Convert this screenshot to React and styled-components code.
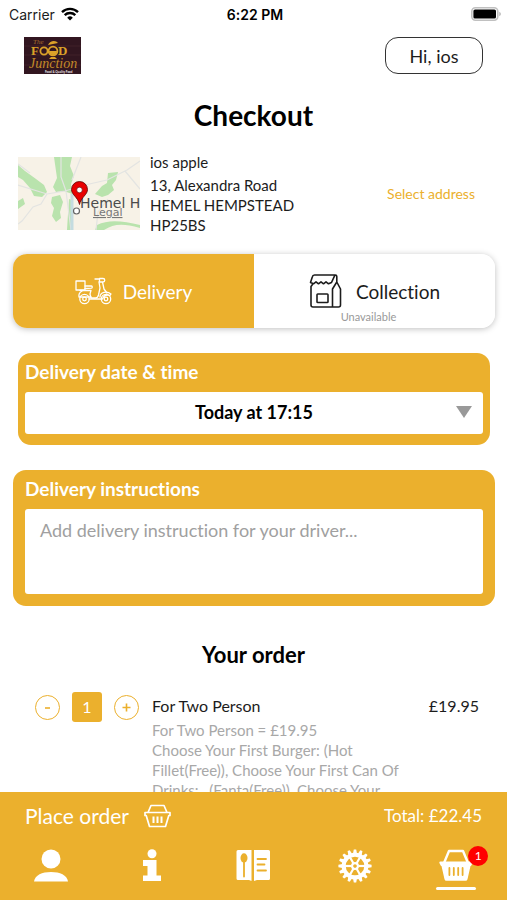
import React, { useState } from 'react';
import styled, { createGlobalStyle } from 'styled-components';

const AMBER = '#ebb02d';

const GlobalStyle = createGlobalStyle`
  * {
    box-sizing: border-box;
  }

  body {
    margin: 0;
    background: #fff;
    color: #1c1c1c;
    font-family: Lato, 'Open Sans', sans-serif;
    font-variant-ligatures: none;
  }

  button, select, textarea {
    font-family: inherit;
    font-variant-ligatures: none;
    color: inherit;
  }
`;

const Screen = styled.div`
  display: flex;
  flex-direction: column;
  height: 100vh;
`;

const StatusBar = styled.div`
  display: grid;
  grid-template-columns: 1fr auto 1fr;
  align-items: center;
  height: 28px;
  padding: 0 6px 0 9px;
  font-family: Inter, sans-serif;
  font-size: 14px;
`;

const StatusSide = styled.div`
  display: flex;
  align-items: center;
  justify-content: ${props => props.$end ? 'flex-end' : 'flex-start'};
  gap: 6px;
`;

const Clock = styled.span`
  font-weight: 600;
  color: #000;
`;

const Header = styled.header`
  display: flex;
  justify-content: space-between;
  align-items: center;
  padding: 9px 24px 0;
`;

const Greeting = styled.button`
  width: 98px;
  height: 37px;
  padding: 0;
  border: 1px solid #333;
  border-radius: 13px;
  background: #fff;
  font-size: 18px;
`;

const Content = styled.main`
  flex: 1;
  min-height: 0;
  overflow: hidden;
`;

const Title = styled.h1`
  margin: 23px 0 19px;
  font-size: 28px;
  line-height: 36px;
  font-weight: 700;
  text-align: center;
  color: #000;
`;

const AddressRow = styled.section`
  display: flex;
  align-items: center;
  padding: 0 32px 0 18px;
`;

const AddressText = styled.address`
  flex: 1;
  margin-left: 10px;
  font-style: normal;
  font-size: 15px;
  line-height: 20px;
`;

const AddressName = styled.div`
  margin-bottom: 3px;
`;

const SelectAddress = styled.a`
  font-size: 14px;
  color: ${AMBER};
  text-decoration: none;
`;

const MethodSwitch = styled.div`
  display: grid;
  grid-template-columns: 1fr 1fr;
  height: 74px;
  margin: 19px 12px 25px 13px;
  border-radius: 14px;
  background: #fff;
  box-shadow: 0 1px 6px rgba(0, 0, 0, 0.25);
  overflow: hidden;
`;

const Method = styled.button`
  display: flex;
  align-items: center;
  justify-content: center;
  gap: ${props => props.$active ? '11px' : '14px'};
  position: relative;
  padding: 0;
  border: 0;
  background: ${props => props.$active ? AMBER : '#fff'};
  color: ${props => props.$active ? '#fff' : '#1c1c1c'};
  font-size: 19px;
`;

const MethodNote = styled.span`
  position: absolute;
  bottom: 4px;
  left: 0;
  right: 0;
  padding-right: 12px;
  font-size: 11px;
  line-height: 14px;
  text-align: center;
  color: #999;
`;

const Panel = styled.section`
  margin: 0 ${props => props.$inset ? '17px' : '12px'} 25px ${props => props.$inset ? '18px' : '13px'};
  padding: 0 ${props => props.$inset ? '7px' : '12px'} ${props => props.$inset ? '11px' : '12px'};
  border-radius: 13px;
  background: ${AMBER};
`;

const PanelLabel = styled.label`
  display: block;
  padding-bottom: 2px;
  font-size: 19px;
  line-height: 37px;
  font-weight: 700;
  color: #fff;
`;

const SelectWrap = styled.div`
  position: relative;
`;

const TimeSelect = styled.select`
  display: block;
  appearance: none;
  width: 100%;
  height: 42px;
  padding: 0 0 2px;
  border: 0;
  border-radius: 3px;
  background: #fff;
  color: #000;
  font-size: 18px;
  font-weight: 700;
  text-align: center;
  text-align-last: center;
`;

const Caret = styled.svg`
  position: absolute;
  top: 14px;
  right: 11px;
  pointer-events: none;
`;

const Instructions = styled.textarea`
  display: block;
  width: 100%;
  height: 85px;
  padding: 9px 15px;
  border: 0;
  border-radius: 3px;
  background: #fff;
  font-size: 18px;
  line-height: 24px;
  resize: none;

  &::placeholder {
    color: #a0a0a0;
    opacity: 1;
  }
`;

const OrderTitle = styled.h2`
  margin: 35px 0 23px;
  font-size: 22px;
  line-height: 28px;
  font-weight: 700;
  text-align: center;
  color: #000;
`;

const OrderItem = styled.article`
  display: grid;
  grid-template-columns: auto 1fr auto;
  align-items: start;
  padding: 0 28px 0 35px;
  font-size: 16px;
`;

const Stepper = styled.div`
  display: flex;
  align-items: center;
  gap: 12px;
  height: 30px;
  margin-right: 13px;
`;

const StepButton = styled.button`
  display: grid;
  place-items: center;
  width: 25px;
  height: 25px;
  padding: 0;
  border: 1px solid ${AMBER};
  border-radius: 50%;
  background: #fff;
  color: ${AMBER};
`;

const Quantity = styled.output`
  width: 30px;
  border-radius: 3px;
  background: ${AMBER};
  color: #fff;
  line-height: 30px;
  text-align: center;
`;

const ItemName = styled.h3`
  margin: 0;
  font-size: 16px;
  line-height: 28px;
  font-weight: 400;
`;

const ItemOptions = styled.p`
  margin: 0;
  font-size: 15px;
  line-height: 20px;
  color: #a8a8a8;
`;

const Price = styled.span`
  min-width: 68px;
  line-height: 28px;
  text-align: right;
`;

const Footer = styled.footer`
  background: ${AMBER};
  color: #fff;
`;

const OrderBar = styled.div`
  display: flex;
  align-items: center;
  justify-content: space-between;
  height: 47px;
  padding: 0 25px;
`;

const PlaceOrder = styled.button`
  display: flex;
  align-items: center;
  gap: 15px;
  padding: 0;
  border: 0;
  background: none;
  color: #fff;
  font-size: 21px;
`;

const Total = styled.span`
  font-size: 17px;
`;

const Tabs = styled.nav`
  display: grid;
  grid-template-columns: repeat(5, 1fr);
  height: 61px;
`;

const Tab = styled.a`
  display: flex;
  flex-direction: column;
  align-items: center;
  padding-top: 10px;
  color: #fff;
`;

const TabIcon = styled.span`
  display: flex;
  position: relative;
`;

const Badge = styled.span`
  position: absolute;
  top: -3px;
  right: -15px;
  width: 20px;
  border-radius: 50%;
  background: #f00;
  color: #fff;
  font-size: 12px;
  line-height: 20px;
  text-align: center;
`;

const ActiveLine = styled.span`
  width: 40px;
  height: 3px;
  margin-top: 5px;
  border-radius: 2px;
  background: #fff;
`;

const WifiIcon = () => (
  <svg width="18" height="14" viewBox="0 0 18 14" aria-hidden="true">
    <path d="M9 13.6 6.2 10.7a4 4 0 0 1 5.6 0Z" fill="#000" />
    <path d="M3.7 8.1a7.6 7.6 0 0 1 10.6 0M1 5.1a11.5 11.5 0 0 1 16 0" fill="none" stroke="#000" strokeWidth="2.4" />
  </svg>
);

const BatteryIcon = () => (
  <svg width="30" height="14" viewBox="0 0 30 14" aria-hidden="true">
    <rect x="0.8" y="0.8" width="26" height="12.4" rx="3.6" fill="#fff" stroke="#c0c0c0" strokeWidth="1.6" />
    <rect x="2.4" y="2.4" width="22.6" height="9.2" rx="1.6" fill="#000" />
    <path d="M28.300 4.8c2 .8 2 3.6 0 4.4Z" fill="#b5b5b5" />
  </svg>
);

const Logo = () => (
  <svg width="57" height="37" viewBox="0 0 57 37" role="img" aria-label="The Food Junction">
    <rect width="57" height="37" fill="#321620" />
    <path d="M0 9h57M0 18h57M0 28h57" stroke="#4b2930" strokeWidth="0.6" />
    <g fill="#dba229" fontFamily="'Liberation Serif', serif">
      <text x="9" y="7" fontSize="7" fontStyle="italic" fill="#a8702c">The</text>
      <text x="7" y="18" fontSize="13" fontWeight="700">F</text>
      <text x="34" y="18" fontSize="13" fontWeight="700">D</text>
      <text x="5" y="31" fontSize="14" fontStyle="italic" fill="#c48a28">Junction</text>
    </g>
    <circle cx="20" cy="14" r="3.6" fill="none" stroke="#dba229" strokeWidth="1.8" />
    <circle cx="29" cy="14" r="4.4" fill="none" stroke="#dba229" strokeWidth="1.8" />
    <path d="M25 14h8a4 4 0 0 1-8 0ZM27 20h4l2 2h-8ZM24 8c2-5 8-5 10-2" fill="#dba229" />
    <text x="21" y="36" fontSize="3" fontWeight="700" fill="#eee" fontFamily="Lato, sans-serif">Food &amp; Quality Food</text>
  </svg>
);

const MapPreview = () => (
  <svg width="122" height="73" viewBox="0 0 122 73" role="img" aria-label="Map of Hemel Hempstead">
    <rect width="122" height="73" fill="#f7f2e7" />
    <g fill="#b9e3ad">
      <path d="M36 0h18l-2 9 4 10-3 8 1 10-8-3-8 1-3-5 4-9Z" />
      <path d="m0 8 7 6 11 8 8 6 3 7-5 5-8-1-4-8-7-8-5-3ZM34 40l8-2 3 7-3 10 1 6-5 4-4-6 2-8-3-5ZM0 44l5-3 2 6-7 5ZM90 16l10-1-2 8-4 5 2 5-6 5-6 2-7-3 7-8 5-3ZM79 68c12-6 26-4 43 0v3c-18-5-26-4-36 2h-9Z" />
      <path d="M51 42l3 1-1 30h-4Z" />
    </g>
    <g fill="none" stroke="#e3e4e2" strokeWidth="1.2">
      <path d="M43 0v20l5 14 5 39M0 28l29 9 18-3 20-6 22-5 20-10 13-9M29 37l-6 10-8 3-11 14-4 3M63 0l-9 23M107 14l15 18M90 42l-10 13-2 18M0 7l12 9" />
    </g>
    <path d="M54 37v36" stroke="#c4dce0" strokeWidth="3" />
    <text x="62" y="51" fontSize="14" fill="#4b4b4b" fontFamily="'DejaVu Sans', sans-serif">Hemel Hempstead</text>
    <text x="75" y="59" fontSize="11" fill="#777" textDecoration="underline" fontFamily="'DejaVu Sans', sans-serif">Legal</text>
    <circle cx="58.500" cy="54" r="3" fill="#fff" stroke="#666" strokeWidth="1.2" />
    <path d="M61.500 47.500C60 40 53.500 38 53.500 32.500a8 8 0 0 1 16 0C69.500 38 63 40 61.500 47.500Z" fill="#e80000" stroke="#5c0000" strokeWidth="0.8" />
    <circle cx="61.500" cy="33" r="2.800" fill="#fff" stroke="#5c0000" strokeWidth="0.6" />
  </svg>
);

const ScooterIcon = () => (
  <svg width="37" height="28" viewBox="0 0 37 28" fill="none" stroke="currentColor" strokeWidth="1.3" strokeLinecap="round" strokeLinejoin="round" aria-hidden="true">
    <rect x="1" y="4" width="9" height="9" />
    <path d="M10 9h6.500c1 0 1 2 0 2.200L10 11.500M5 13.500h11l-1 3.500 1 4h4.500c1.500 0 2.500-1 3-3l1.500-7-1-6" />
    <path d="M20 2h4.500M24.500 1.500h3.500a1.500 1.500 0 0 1 0 3.500h-3.500ZM27.500 5l1.500 7 3 4" />
    <path d="M4 20c-.5-3 1-5 3-6M4 20h12M25 20c0-5 7-6.500 11-3l-1 1.500c-3-1-6-.5-7.500 3.500H14" />
    <circle cx="9.500" cy="22" r="4.700" />
    <circle cx="9.500" cy="22" r="1.800" />
    <circle cx="31" cy="22" r="4.700" />
    <circle cx="31" cy="22" r="1.800" />
  </svg>
);

const BagIcon = () => (
  <svg width="33" height="34" viewBox="0 0 33 34" fill="none" stroke="currentColor" strokeWidth="1.600" strokeLinecap="round" strokeLinejoin="round" aria-hidden="true">
    <path d="M2 12.500V31a2 2 0 0 0 2 2h25.500a2 2 0 0 0 2-2V15L27.800 8V2.500c0-1-.5-1.500-1.500-1.500H5.500C4 1 3.500 2 3.300 3L1.500 8.500l3 1.300 2.500-2 2.500 2 2.500-2 2.500 2 2.500-2 2.500 2 3-1.300 3.300-7.200M27.800 8 23.500 15v17.500M2 12.500l1.500-2" />
    <rect x="8" y="20" width="11" height="8.500" rx="0.800" />
  </svg>
);

const BasketOutlineIcon = () => (
  <svg width="27" height="24" viewBox="0 0 27 24" fill="none" stroke="currentColor" strokeWidth="1.700" strokeLinejoin="round" aria-hidden="true">
    <path d="M1 8.500h25v3h-1.200L21.500 22.500h-16L2.200 11.500H1ZM4 8.500 7 1.500h13l3 7" />
    <path d="M9.500 12.500v6.500M13.500 12.500v6.500M17.500 12.500v6.500" strokeWidth="2" />
  </svg>
);

const UserIcon = () => (
  <svg width="34" height="33" viewBox="0 0 34 33" fill="currentColor" aria-hidden="true">
    <circle cx="17" cy="10" r="9.500" />
    <path d="M0 32.500C1 26 8 23 17 23s16 3 17 9.500Z" />
  </svg>
);

const InfoIcon = () => (
  <svg width="18" height="33" viewBox="0 0 18 33" fill="currentColor" aria-hidden="true">
    <circle cx="9" cy="4.800" r="4.500" />
    <path d="M0 11h13.500v15.500H18v5.500H0v-5.500h4.500V17H0Z" />
  </svg>
);

const MenuIcon = () => (
  <svg width="34" height="33" viewBox="0 0 34 33" aria-hidden="true">
    <path d="M2 1h13.500v31L13 31H2a1.500 1.500 0 0 1-1.500-1.500v-27A1.500 1.500 0 0 1 2 1ZM18 1h14.500A1.500 1.500 0 0 1 34 2.500v27a1.500 1.500 0 0 1-1.500 1.500H21l-3 1Z" fill="currentColor" />
    <ellipse cx="8" cy="9" rx="3.500" ry="4.700" fill={AMBER} />
    <path d="M8 12v15.500M21.500 10h8.500M21.500 15.500h7M21.500 21.500h8.500" stroke={AMBER} strokeWidth="1.800" strokeLinecap="round" />
  </svg>
);

const GEAR_TEETH = Array.from({ length: 16 }, (_, i) => i * 22.5);
const GEAR_SPOKES = [0, 60, 120, 180, 240, 300];

const GearIcon = () => (
  <svg width="34" height="34" viewBox="-17 -17 34 34" stroke="currentColor" fill="none" aria-hidden="true">
    {GEAR_TEETH.map(angle => (
      <path key={angle} d="M-2-12.500-1.200-16.600H1.200L2-12.500Z" transform={`rotate(${angle})`} fill="currentColor" stroke="none" />
    ))}
    <circle r="11.300" strokeWidth="4" />
    <circle r="2.900" strokeWidth="2.200" />
    {GEAR_SPOKES.map(angle => (
      <path key={angle} d="M3.500 0H11" transform={`rotate(${angle})`} strokeWidth="2.200" />
    ))}
  </svg>
);

const BasketIcon = () => (
  <svg width="34" height="33" viewBox="0 0 34 33" aria-hidden="true">
    <path d="M5 14 10 2h14l5 12" fill="none" stroke="currentColor" strokeWidth="2.400" strokeLinejoin="round" />
    <path d="M1.500 12.500h31a1.300 1.300 0 0 1 1 1.800L32 17h-.5l-3 13.200a2 2 0 0 1-2 1.500h-19a2 2 0 0 1-2-1.500L2.500 17H2L.5 14.300a1.300 1.300 0 0 1 1-1.800Z" fill="currentColor" />
    <path d="M10.400 19v7M14.800 19v7M19.200 19v7M23.600 19v7" stroke={AMBER} strokeWidth="1.800" strokeLinecap="round" />
  </svg>
);

const TABS = [
  { name: 'Account', Icon: UserIcon },
  { name: 'Info', Icon: InfoIcon },
  { name: 'Menu', Icon: MenuIcon },
  { name: 'Settings', Icon: GearIcon },
  { name: 'Basket', Icon: BasketIcon, count: 1, active: true },
];

const App = () => {
  const [quantity, setQuantity] = useState(1);

  return (
    <Screen>
      <GlobalStyle />
      <StatusBar>
        <StatusSide>Carrier <WifiIcon /></StatusSide>
        <Clock>6:22 PM</Clock>
        <StatusSide $end><BatteryIcon /></StatusSide>
      </StatusBar>
      <Header>
        <Logo />
        <Greeting type="button">Hi, ios</Greeting>
      </Header>

      <Content>
        <Title>Checkout</Title>

        <AddressRow>
          <MapPreview />
          <AddressText>
            <AddressName>ios apple</AddressName>
            <div>13, Alexandra Road</div>
            <div>HEMEL HEMPSTEAD</div>
            <div>HP25BS</div>
          </AddressText>
          <SelectAddress href="#address">Select address</SelectAddress>
        </AddressRow>

        <MethodSwitch>
          <Method type="button" $active>
            <ScooterIcon />
            Delivery
          </Method>
          <Method type="button">
            <BagIcon />
            Collection
            <MethodNote>Unavailable</MethodNote>
          </Method>
        </MethodSwitch>

        <Panel $inset>
          <PanelLabel htmlFor="delivery-time">Delivery date &amp; time</PanelLabel>
          <SelectWrap>
            <TimeSelect id="delivery-time">
              <option>Today at 17:15</option>
            </TimeSelect>
            <Caret width="16" height="12" viewBox="0 0 16 12" aria-hidden="true">
              <path d="M0 0h16L8 12Z" fill="#999" />
            </Caret>
          </SelectWrap>
        </Panel>

        <Panel>
          <PanelLabel htmlFor="delivery-notes">Delivery instructions</PanelLabel>
          <Instructions id="delivery-notes" placeholder="Add delivery instruction for your driver..." />
        </Panel>

        <OrderTitle>Your order</OrderTitle>
        <OrderItem>
          <Stepper>
            <StepButton type="button" aria-label="Remove one" onClick={() => setQuantity(Math.max(0, quantity - 1))}>
              <svg width="9" height="9" viewBox="0 0 9 9"><path d="M2 5h5" stroke="currentColor" strokeWidth="1.6" /></svg>
            </StepButton>
            <Quantity>{quantity}</Quantity>
            <StepButton type="button" aria-label="Add one" onClick={() => setQuantity(quantity + 1)}>
              <svg width="9" height="9" viewBox="0 0 9 9"><path d="M.5 4.500h8M4.500.5v8" stroke="currentColor" strokeWidth="1.6" /></svg>
            </StepButton>
          </Stepper>
          <div>
            <ItemName>For Two Person</ItemName>
            <ItemOptions>
              For Two Person = £19.95<br />
              Choose Your First Burger: (Hot Fillet(Free)), Choose Your First Can Of Drinks:_ (Fanta(Free)), Choose Your
            </ItemOptions>
          </div>
          <Price>£19.95</Price>
        </OrderItem>
      </Content>

      <Footer>
        <OrderBar>
          <PlaceOrder type="button">
            Place order
            <BasketOutlineIcon />
          </PlaceOrder>
          <Total>Total: £22.45</Total>
        </OrderBar>
        <Tabs>
          {TABS.map(({ name, Icon, count, active }) => (
            <Tab key={name} href={`#${name.toLowerCase()}`} aria-label={name}>
              <TabIcon>
                <Icon />
                {count && <Badge>{count}</Badge>}
              </TabIcon>
              {active && <ActiveLine />}
            </Tab>
          ))}
        </Tabs>
      </Footer>
    </Screen>
  );
};

export default App;
